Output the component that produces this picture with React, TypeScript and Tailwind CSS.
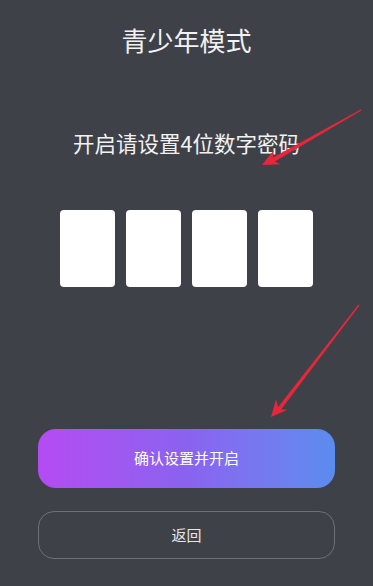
import React from "react";

const font = { fontFamily: '"Noto Sans CJK SC", "Noto Sans", sans-serif' };

const PinBox = () => (
  <div className="w-[55px] h-[77px] rounded-[4px] bg-white" />
);

export default function App() {
  return (
    <div
      className="relative h-[586px] w-full bg-[#3f4148] overflow-hidden flex flex-col items-center"
      style={font}
    >
      <h1 className="mt-[24px] text-[26px] leading-[32px] text-[#f2f2f2] font-normal">
        青少年模式
      </h1>
      <p className="mt-[73px] text-[21.5px] leading-[28px] text-[#f2f2f2]">
        开启请设置4位数字密码
      </p>

      <div className="mt-[53px] flex gap-[11px]">
        <PinBox />
        <PinBox />
        <PinBox />
        <PinBox />
      </div>

      <button className="mt-[142px] w-[297px] h-[59px] rounded-[18px] bg-gradient-to-r from-[#b54af3] via-[#8a62f0] to-[#5a8cef] text-white text-[15px]">
        确认设置并开启
      </button>
      <button className="mt-[23px] w-[297px] h-[48px] rounded-[16px] border border-[#6e7077] text-[#e6e6e6] text-[15px]">
        返回
      </button>

      {/* red annotation arrows */}
      <svg
        className="absolute inset-0 pointer-events-none"
        width="373"
        height="586"
        viewBox="0 0 373 586"
      >
        <polygon
          fill="#e8263b"
          points="361.3,110.5 274.8,161.4 280.5,164.2 262,165 273.6,150.5 273.1,157.4 360.7,109.5"
        />
        <polygon
          fill="#e8263b"
          points="359.5,305.4 281.3,409.3 287.5,409.8 271,417 276,399.3 278.1,407.1 358.5,304.6"
        />
      </svg>
    </div>
  );
}
